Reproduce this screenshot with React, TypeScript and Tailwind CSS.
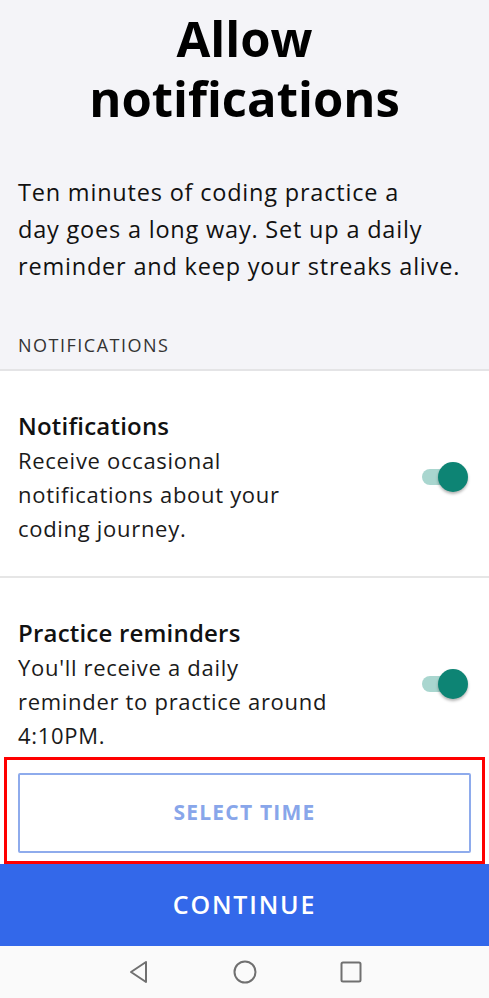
import React from "react";

const font = { fontFamily: "'Open Sans', Lato, sans-serif" };

const Toggle: React.FC = () => (
  <div className="relative w-[48px] h-[30px] shrink-0">
    <div className="absolute left-[2px] top-[7px] w-[36px] h-[16px] rounded-full bg-[#a9d6cf]" />
    <div className="absolute right-0 top-0 w-[30px] h-[30px] rounded-full bg-[#0d8474] shadow-[0_2px_3px_rgba(0,0,0,0.3)]" />
  </div>
);

const SettingRow: React.FC<{ title: string; lines: string[] }> = ({ title, lines }) => (
  <div className="flex items-center justify-between pl-[18px] pr-[21px]">
    <div className="flex flex-col">
      <p className="text-[24px] leading-[34px] font-semibold tracking-[0.2px] text-[#111]">{title}</p>
      {lines.map((l) => (
        <p key={l} className="text-[22px] leading-[34px] tracking-[0.7px] text-[#1a1a1a]">
          {l}
        </p>
      ))}
    </div>
    <Toggle />
  </div>
);

export default function App() {
  return (
    <div className="w-[489px] h-[998px] flex flex-col bg-white overflow-hidden" style={font}>
      <section className="bg-[#f4f4f8] pt-[8px] pb-[12px]">
        <h1 className="text-center text-[49px] leading-[60px] font-bold text-black">
          Allow
          <br />
          notifications
        </h1>
        <p className="mt-[46px] px-[18px] text-[23.5px] leading-[37px] tracking-[0.8px] text-[#111]">
          Ten minutes of coding practice a
          <br />
          day goes a long way. Set up a daily
          <br />
          reminder and keep your streaks alive.
        </p>
        <p className="mt-[48px] px-[18px] text-[18px] leading-[24px] tracking-[1.5px] text-[#333]">
          NOTIFICATIONS
        </p>
      </section>
      <div className="h-[2px] bg-[#e4e4e6]" />
      <div className="pt-[38px] pb-[31px]">
        <SettingRow
          title="Notifications"
          lines={["Receive occasional", "notifications about your", "coding journey."]}
        />
      </div>
      <div className="h-[2px] bg-[#e6e6e6]" />
      <div className="pt-[38px] pb-[5px]">
        <SettingRow
          title="Practice reminders"
          lines={["You'll receive a daily", "reminder to practice around", "4:10PM."]}
        />
      </div>
      <div className="mx-[4px] border-[3px] border-[#ff0000] px-[11px] pt-[13px] pb-[8px]">
        <button className="w-full h-[80px] border-2 border-[#8eabec] rounded-[2px] bg-white text-[21px] font-bold tracking-[1.2px] text-[#88a6ea]">
          SELECT TIME
        </button>
      </div>
      <button className="h-[82px] bg-[#3368ea] text-white text-[25px] font-semibold tracking-[1.8px]">
        CONTINUE
      </button>
      <nav className="flex-1 bg-[#fafafa] flex items-center justify-center gap-[82px]">
        <svg width="24" height="24" viewBox="0 0 24 24" fill="none" stroke="#707070" strokeWidth="2" strokeLinejoin="round">
          <path d="M19 2 L4 12 L19 22 Z" />
        </svg>
        <svg width="24" height="24" viewBox="0 0 24 24" fill="none" stroke="#707070" strokeWidth="2">
          <circle cx="12" cy="12" r="10.5" />
        </svg>
        <svg width="24" height="24" viewBox="0 0 24 24" fill="none" stroke="#707070" strokeWidth="2">
          <rect x="2.5" y="2.5" width="19" height="19" rx="1.5" />
        </svg>
      </nav>
    </div>
  );
}
